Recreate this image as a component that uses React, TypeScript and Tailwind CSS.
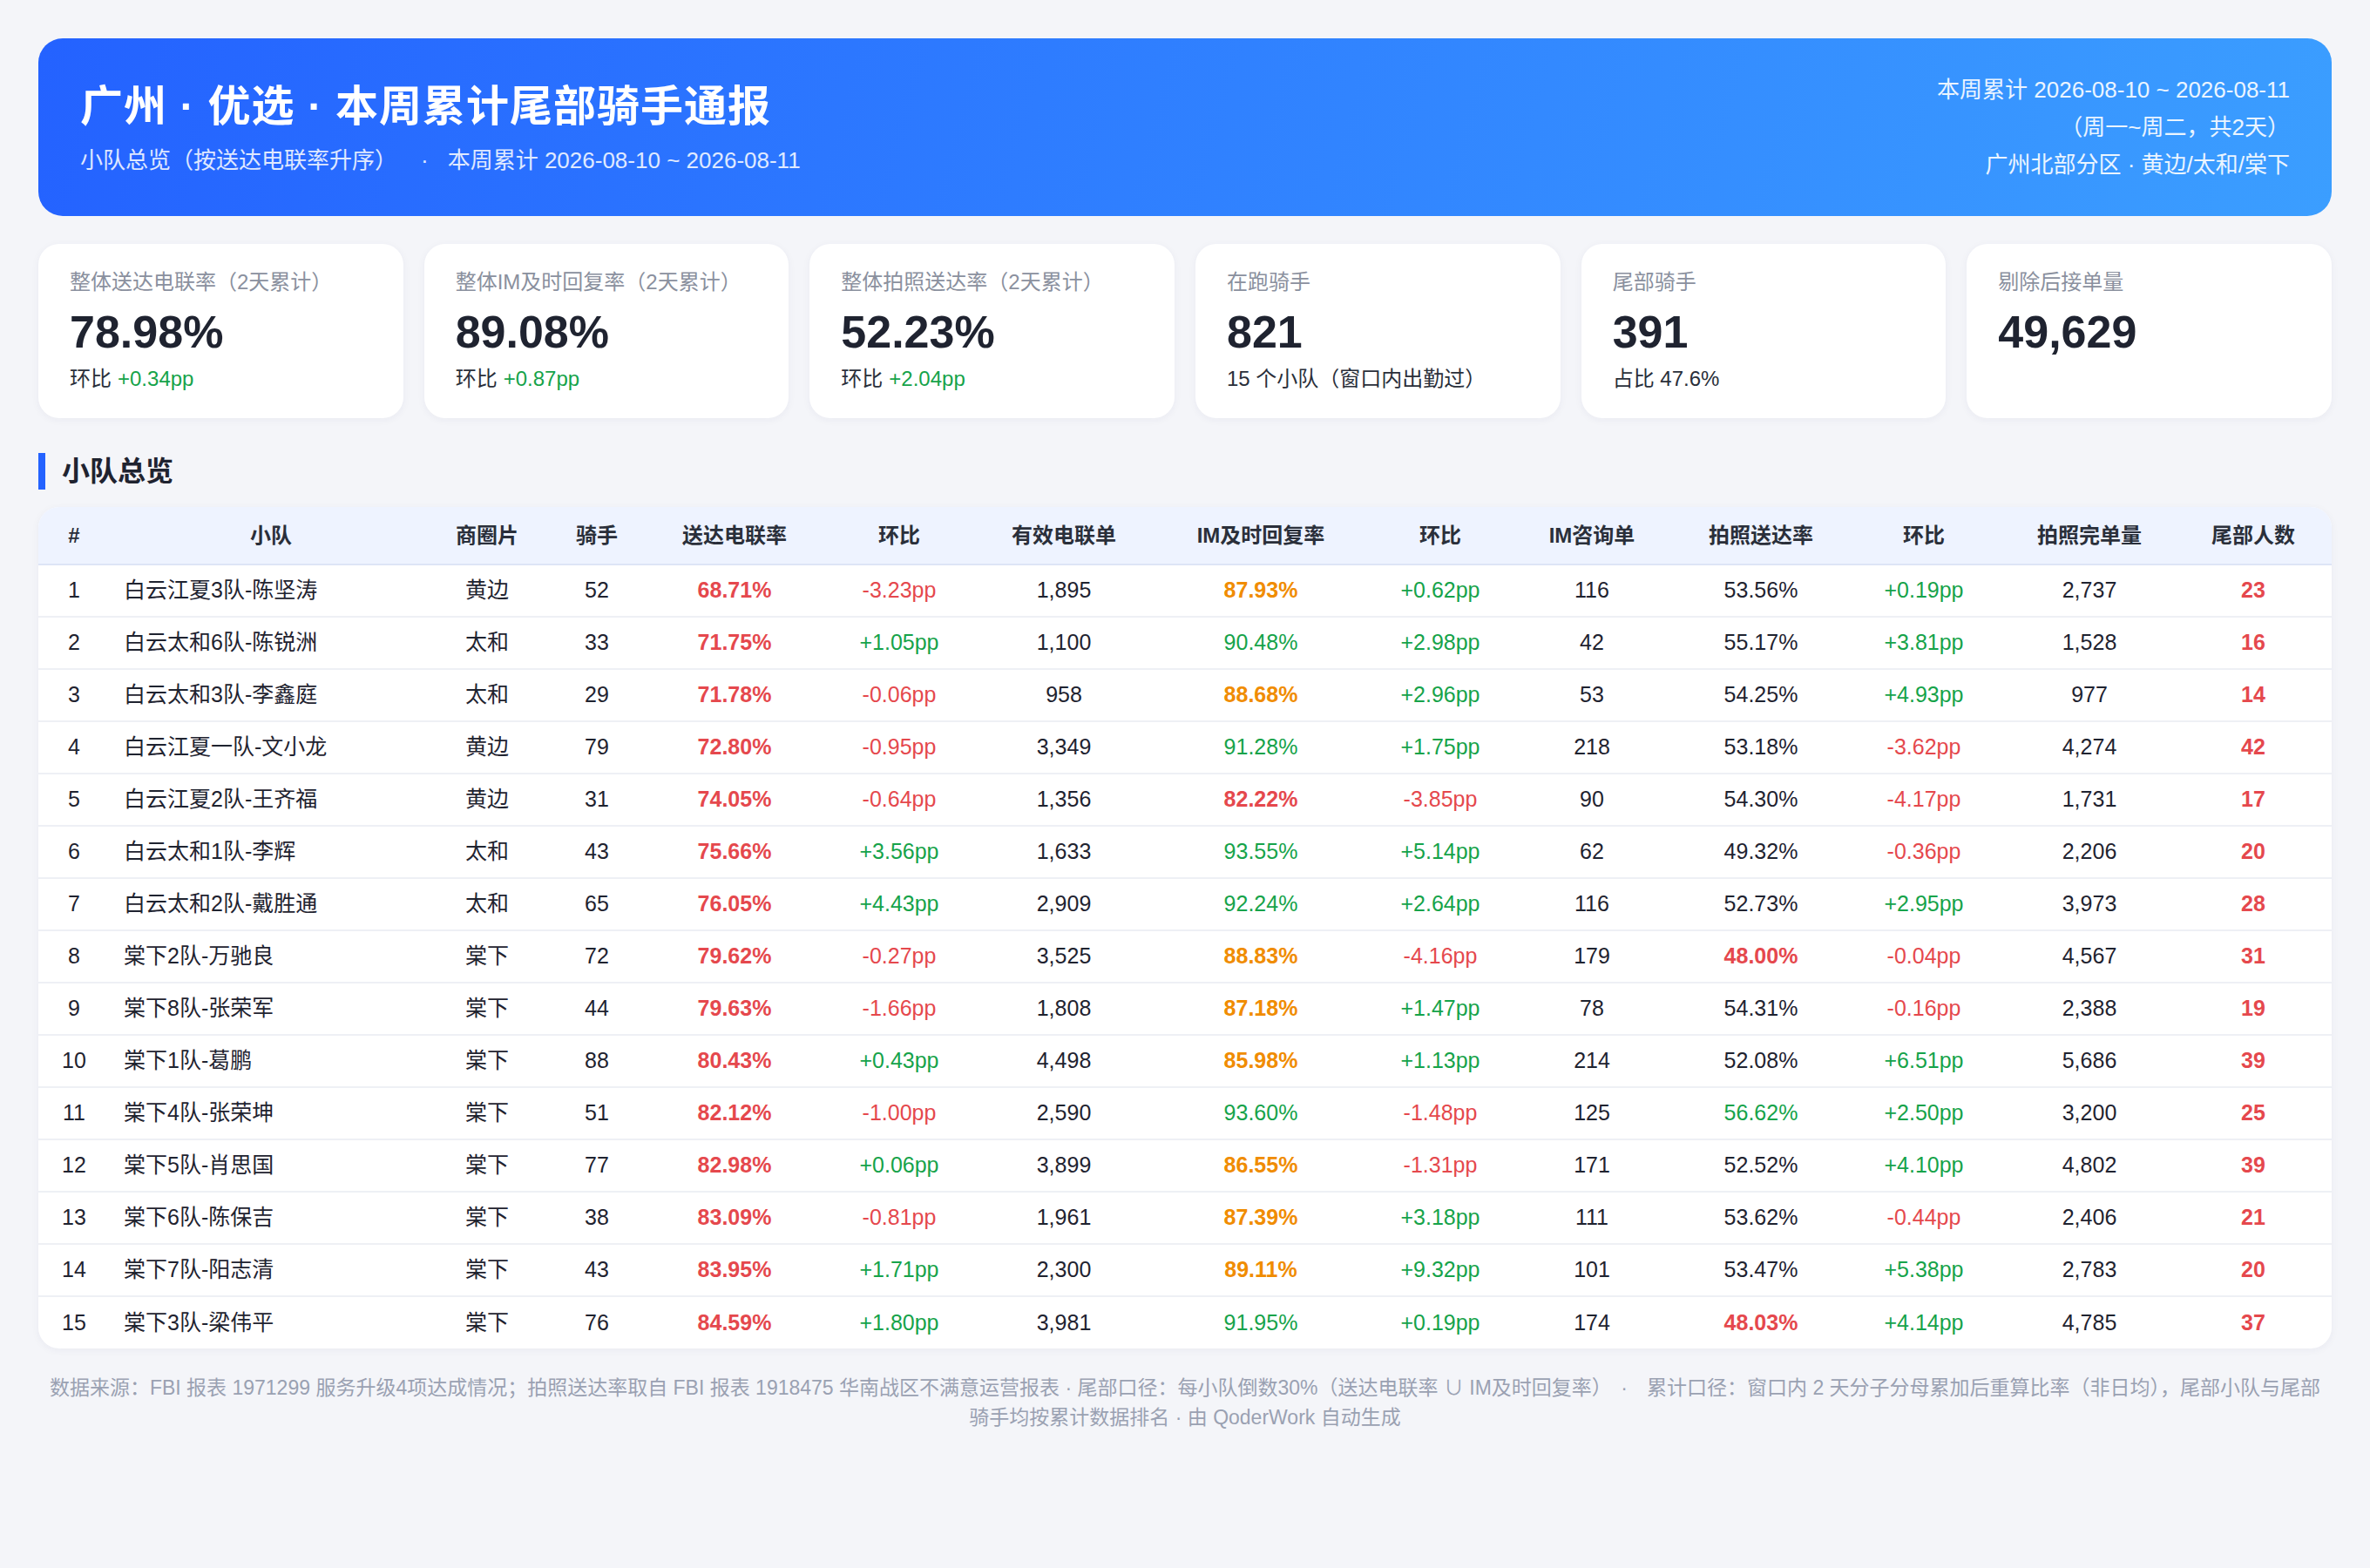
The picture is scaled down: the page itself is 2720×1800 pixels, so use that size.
import React from "react";

type Tone = "red" | "green" | "orange" | "plain";

interface Row {
  name: string;
  area: string;
  riders: number;
  callRate: string;
  callDelta: string;
  calls: string;
  imRate: string;
  imTone: Tone;
  imDelta: string;
  imCount: number;
  photoRate: string;
  photoTone: Tone;
  photoDelta: string;
  photoDone: string;
  tail: number;
}

const rows: Row[] = [
  { name: "白云江夏3队-陈坚涛", area: "黄边", riders: 52, callRate: "68.71%", callDelta: "-3.23pp", calls: "1,895", imRate: "87.93%", imTone: "orange", imDelta: "+0.62pp", imCount: 116, photoRate: "53.56%", photoTone: "plain", photoDelta: "+0.19pp", photoDone: "2,737", tail: 23 },
  { name: "白云太和6队-陈锐洲", area: "太和", riders: 33, callRate: "71.75%", callDelta: "+1.05pp", calls: "1,100", imRate: "90.48%", imTone: "green", imDelta: "+2.98pp", imCount: 42, photoRate: "55.17%", photoTone: "plain", photoDelta: "+3.81pp", photoDone: "1,528", tail: 16 },
  { name: "白云太和3队-李鑫庭", area: "太和", riders: 29, callRate: "71.78%", callDelta: "-0.06pp", calls: "958", imRate: "88.68%", imTone: "orange", imDelta: "+2.96pp", imCount: 53, photoRate: "54.25%", photoTone: "plain", photoDelta: "+4.93pp", photoDone: "977", tail: 14 },
  { name: "白云江夏一队-文小龙", area: "黄边", riders: 79, callRate: "72.80%", callDelta: "-0.95pp", calls: "3,349", imRate: "91.28%", imTone: "green", imDelta: "+1.75pp", imCount: 218, photoRate: "53.18%", photoTone: "plain", photoDelta: "-3.62pp", photoDone: "4,274", tail: 42 },
  { name: "白云江夏2队-王齐福", area: "黄边", riders: 31, callRate: "74.05%", callDelta: "-0.64pp", calls: "1,356", imRate: "82.22%", imTone: "red", imDelta: "-3.85pp", imCount: 90, photoRate: "54.30%", photoTone: "plain", photoDelta: "-4.17pp", photoDone: "1,731", tail: 17 },
  { name: "白云太和1队-李辉", area: "太和", riders: 43, callRate: "75.66%", callDelta: "+3.56pp", calls: "1,633", imRate: "93.55%", imTone: "green", imDelta: "+5.14pp", imCount: 62, photoRate: "49.32%", photoTone: "plain", photoDelta: "-0.36pp", photoDone: "2,206", tail: 20 },
  { name: "白云太和2队-戴胜通", area: "太和", riders: 65, callRate: "76.05%", callDelta: "+4.43pp", calls: "2,909", imRate: "92.24%", imTone: "green", imDelta: "+2.64pp", imCount: 116, photoRate: "52.73%", photoTone: "plain", photoDelta: "+2.95pp", photoDone: "3,973", tail: 28 },
  { name: "棠下2队-万驰良", area: "棠下", riders: 72, callRate: "79.62%", callDelta: "-0.27pp", calls: "3,525", imRate: "88.83%", imTone: "orange", imDelta: "-4.16pp", imCount: 179, photoRate: "48.00%", photoTone: "red", photoDelta: "-0.04pp", photoDone: "4,567", tail: 31 },
  { name: "棠下8队-张荣军", area: "棠下", riders: 44, callRate: "79.63%", callDelta: "-1.66pp", calls: "1,808", imRate: "87.18%", imTone: "orange", imDelta: "+1.47pp", imCount: 78, photoRate: "54.31%", photoTone: "plain", photoDelta: "-0.16pp", photoDone: "2,388", tail: 19 },
  { name: "棠下1队-葛鹏", area: "棠下", riders: 88, callRate: "80.43%", callDelta: "+0.43pp", calls: "4,498", imRate: "85.98%", imTone: "orange", imDelta: "+1.13pp", imCount: 214, photoRate: "52.08%", photoTone: "plain", photoDelta: "+6.51pp", photoDone: "5,686", tail: 39 },
  { name: "棠下4队-张荣坤", area: "棠下", riders: 51, callRate: "82.12%", callDelta: "-1.00pp", calls: "2,590", imRate: "93.60%", imTone: "green", imDelta: "-1.48pp", imCount: 125, photoRate: "56.62%", photoTone: "green", photoDelta: "+2.50pp", photoDone: "3,200", tail: 25 },
  { name: "棠下5队-肖思国", area: "棠下", riders: 77, callRate: "82.98%", callDelta: "+0.06pp", calls: "3,899", imRate: "86.55%", imTone: "orange", imDelta: "-1.31pp", imCount: 171, photoRate: "52.52%", photoTone: "plain", photoDelta: "+4.10pp", photoDone: "4,802", tail: 39 },
  { name: "棠下6队-陈保吉", area: "棠下", riders: 38, callRate: "83.09%", callDelta: "-0.81pp", calls: "1,961", imRate: "87.39%", imTone: "orange", imDelta: "+3.18pp", imCount: 111, photoRate: "53.62%", photoTone: "plain", photoDelta: "-0.44pp", photoDone: "2,406", tail: 21 },
  { name: "棠下7队-阳志清", area: "棠下", riders: 43, callRate: "83.95%", callDelta: "+1.71pp", calls: "2,300", imRate: "89.11%", imTone: "orange", imDelta: "+9.32pp", imCount: 101, photoRate: "53.47%", photoTone: "plain", photoDelta: "+5.38pp", photoDone: "2,783", tail: 20 },
  { name: "棠下3队-梁伟平", area: "棠下", riders: 76, callRate: "84.59%", callDelta: "+1.80pp", calls: "3,981", imRate: "91.95%", imTone: "green", imDelta: "+0.19pp", imCount: 174, photoRate: "48.03%", photoTone: "red", photoDelta: "+4.14pp", photoDone: "4,785", tail: 37 },
];

const stats = [
  { label: "整体送达电联率（2天累计）", value: "78.98%", sub: "环比", delta: "+0.34pp" },
  { label: "整体IM及时回复率（2天累计）", value: "89.08%", sub: "环比", delta: "+0.87pp" },
  { label: "整体拍照送达率（2天累计）", value: "52.23%", sub: "环比", delta: "+2.04pp" },
  { label: "在跑骑手", value: "821", sub: "15 个小队（窗口内出勤过）" },
  { label: "尾部骑手", value: "391", sub: "占比 47.6%" },
  { label: "剔除后接单量", value: "49,629" },
];

const cols = [
  { title: "#", w: "w-[82px]" },
  { title: "小队", w: "w-[370px]" },
  { title: "商圈片", w: "w-[126px]" },
  { title: "骑手", w: "w-[126px]" },
  { title: "送达电联率", w: "w-[190px]" },
  { title: "环比", w: "w-[188px]" },
  { title: "有效电联单", w: "w-[190px]" },
  { title: "IM及时回复率", w: "w-[262px]" },
  { title: "环比", w: "w-[150px]" },
  { title: "IM咨询单", w: "w-[198px]" },
  { title: "拍照送达率", w: "w-[190px]" },
  { title: "环比", w: "w-[184px]" },
  { title: "拍照完单量", w: "w-[196px]" },
  { title: "尾部人数", w: "w-[180px]" },
];

const toneClass = (t: Tone) =>
  t === "red"
    ? "text-[#e5484d] font-bold"
    : t === "orange"
    ? "text-[#f08c00] font-bold"
    : t === "green"
    ? "text-[#16a34a]"
    : "text-[#1f2330]";

const deltaClass = (d: string) => (d.startsWith("-") ? "text-[#e5484d]" : "text-[#16a34a]");

const App = () => {
  return (
    <div className="min-h-screen bg-[#f4f5f9] px-[44px] pt-[44px] pb-[40px] font-['Liberation_Sans','Noto_Sans_CJK_SC',sans-serif] text-[#1f2330]">
      {/* banner */}
      <header className="flex h-[204px] items-center justify-between rounded-[28px] bg-[linear-gradient(105deg,#2462ff,#3b9eff)] px-[48px] text-white">
        <div className="flex flex-col">
          <h1 className="text-[49px] font-bold leading-[64px] tracking-[1px]">广州 · 优选 · 本周累计尾部骑手通报</h1>
          <p className="mt-[12px] text-[26px] leading-[36px] text-white/85">
            小队总览（按送达电联率升序）
            <span className="ml-[40px] mr-[22px]">·</span>
            本周累计 2026-08-10 ~ 2026-08-11
          </p>
        </div>
        <div className="flex flex-col items-end text-[26px] leading-[43px] text-white/90">
          <span>本周累计 2026-08-10 ~ 2026-08-11</span>
          <span>（周一~周二，共2天）</span>
          <span>广州北部分区 · 黄边/太和/棠下</span>
        </div>
      </header>

      {/* stat cards */}
      <div className="mt-[32px] grid grid-cols-6 gap-[24px]">
        {stats.map((s) => (
          <div
            key={s.label}
            className="rounded-[24px] bg-white px-[36px] pt-[27px] pb-[28px] shadow-[0_2px_10px_rgba(30,45,90,0.05)]"
          >
            <div className="text-[24px] leading-[34px] text-[#8a909e]">{s.label}</div>
            <div className="mt-[10px] text-[52px] font-bold leading-[60px] text-[#1f2330]">{s.value}</div>
            {s.sub && (
              <div className="mt-[7px] text-[24px] leading-[34px] text-[#2a2f3a]">
                {s.sub}
                {s.delta && <span className="ml-[7px] text-[#16a34a]">{s.delta}</span>}
              </div>
            )}
          </div>
        ))}
      </div>

      {/* section title */}
      <div className="mt-[40px] flex h-[42px] items-center">
        <div className="h-[42px] w-[8px] bg-[#2462ff]" />
        <h2 className="ml-[19px] text-[32px] font-bold leading-[42px] text-[#1f2330]">小队总览</h2>
      </div>

      {/* table */}
      <div className="mt-[20px] overflow-hidden rounded-[24px] bg-white shadow-[0_2px_10px_rgba(30,45,90,0.05)]">
        <table className="w-full table-fixed border-collapse">
          <colgroup>
            {cols.map((c, i) => (
              <col key={i} className={c.w} />
            ))}
          </colgroup>
          <thead>
            <tr className="h-[66px] border-b-2 border-[#dde5f6] bg-[#eef3ff]">
              {cols.map((c, i) => (
                <th key={i} className="text-center text-[24px] font-bold text-[#2a2f3a]">
                  {c.title}
                </th>
              ))}
            </tr>
          </thead>
          <tbody className="text-[25px]">
            {rows.map((r, i) => (
              <tr
                key={r.name}
                className={`h-[60px] ${i < rows.length - 1 ? "border-b-2 border-[#eef0f5]" : ""}`}
              >
                <td className="text-center">{i + 1}</td>
                <td className="pl-[16px] text-left">{r.name}</td>
                <td className="text-center">{r.area}</td>
                <td className="text-center">{r.riders}</td>
                <td className="text-center font-bold text-[#e5484d]">{r.callRate}</td>
                <td className={`text-center ${deltaClass(r.callDelta)}`}>{r.callDelta}</td>
                <td className="text-center">{r.calls}</td>
                <td className={`text-center ${toneClass(r.imTone)}`}>{r.imRate}</td>
                <td className={`text-center ${deltaClass(r.imDelta)}`}>{r.imDelta}</td>
                <td className="text-center">{r.imCount}</td>
                <td className={`text-center ${toneClass(r.photoTone)}`}>{r.photoRate}</td>
                <td className={`text-center ${deltaClass(r.photoDelta)}`}>{r.photoDelta}</td>
                <td className="text-center">{r.photoDone}</td>
                <td className="text-center font-bold text-[#e5484d]">{r.tail}</td>
              </tr>
            ))}
          </tbody>
        </table>
      </div>

      {/* footer note */}
      <p className="mt-[28px] text-center text-[23px] leading-[34px] text-[#9aa1b2]">
        数据来源：FBI 报表 1971299 服务升级4项达成情况；拍照送达率取自 FBI 报表 1918475 华南战区不满意运营报表 · 尾部口径：每小队倒数30%（送达电联率 ∪ IM及时回复率）
        <span className="mx-[22px]">·</span>
        累计口径：窗口内 2 天分子分母累加后重算比率（非日均），尾部小队与尾部
        <br />
        骑手均按累计数据排名 · 由 QoderWork 自动生成
      </p>
    </div>
  );
};

export default App;
